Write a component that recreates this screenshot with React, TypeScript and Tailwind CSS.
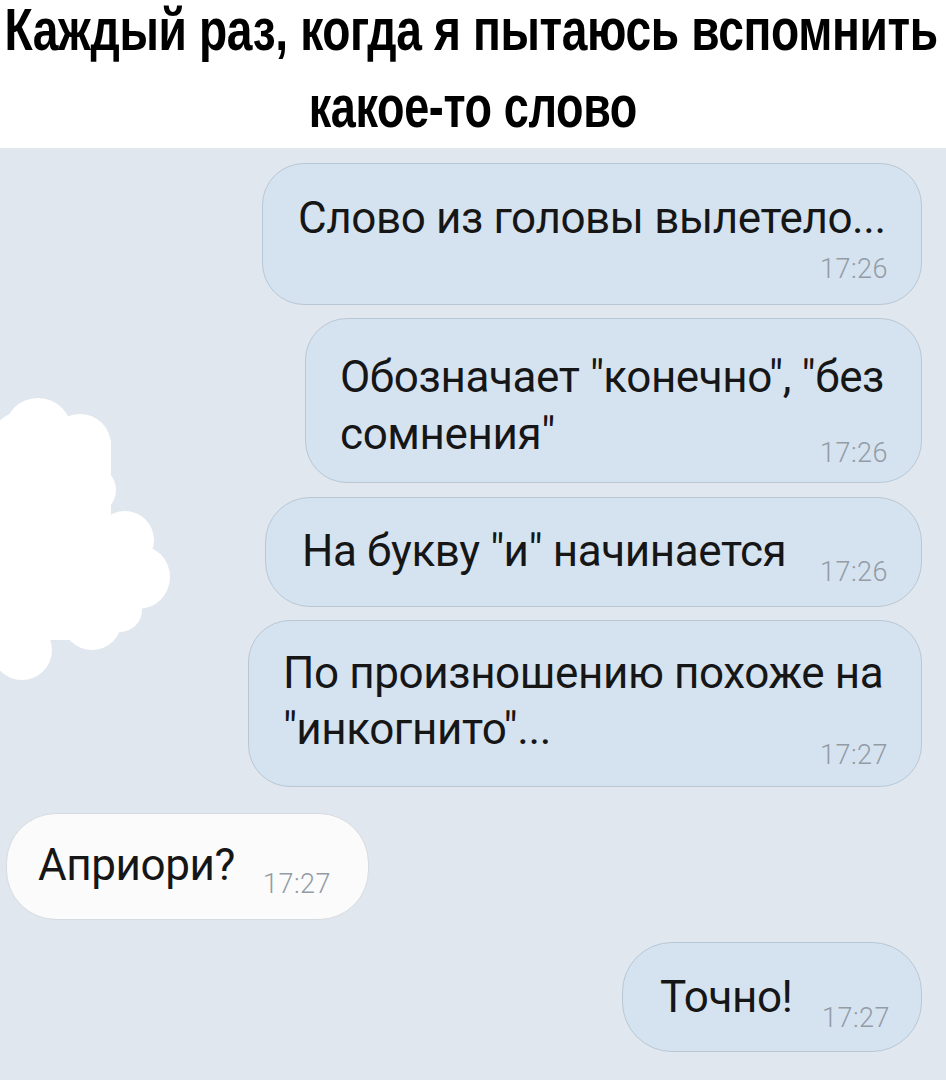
import React from 'react';

const textFont = { fontFamily: 'Roboto, "Liberation Sans", sans-serif' };

function Time({ value, shift }: { value: string; shift: string }) {
  return (
    <span className={`text-[27px] font-light leading-none tracking-[0.5px] text-[#939ba5] ${shift}`} style={textFont}>
      {value}
    </span>
  );
}

// white censor blob over the avatar
function Blob() {
  return (
    <svg className="absolute left-0 top-[232px]" width="180" height="320" viewBox="0 380 180 320">
      <g fill="#ffffff">
        <circle cx="38" cy="432" r="34" />
        <circle cx="20" cy="440" r="28" />
        <circle cx="80" cy="445" r="31" />
        <rect x="0" y="440" width="111" height="200" />
        <circle cx="92" cy="490" r="24" />
        <circle cx="125" cy="540" r="29" />
        <circle cx="138" cy="577" r="32" />
        <circle cx="120" cy="610" r="22" />
        <circle cx="92" cy="620" r="30" />
        <circle cx="22" cy="650" r="30" />
        <rect x="0" y="600" width="50" height="60" />
      </g>
    </svg>
  );
}

export default function App() {
  return (
    <div className="w-[946px] h-[1080px] overflow-hidden bg-white">
      <div
        className="h-[148px] flex flex-col items-center text-black font-bold"
        style={{ fontFamily: '"Liberation Sans", Arial, sans-serif' }}
      >
        <div className="text-[60px] leading-[60px] whitespace-nowrap scale-x-[0.77] tracking-[-0.5px] ml-[-4px]">
          Каждый раз, когда я пытаюсь вспомнить
        </div>
        <div className="mt-[17px] text-[60px] leading-[60px] whitespace-nowrap scale-x-[0.75] tracking-[-0.5px]">
          какое-то слово
        </div>
      </div>

      <div
        className="relative h-[932px] bg-[#e0e7ee] flex flex-col items-end pr-[24px] pt-[15px] text-[#161616] whitespace-nowrap"
        style={textFont}
      >
        <Blob />

        <div className="w-[660px] h-[142px] rounded-[42px] border border-[#b9c7d5] bg-[#d5e3f1] pl-[35px] pr-[33px] pt-[26px]">
          <div className="text-[44px] leading-[56px] tracking-[-0.4px]">Слово из головы вылетело...</div>
          <div className="flex justify-end mt-[10px]">
            <Time value="17:26" shift="" />
          </div>
        </div>

        <div className="mt-[13px] w-[617px] h-[165px] rounded-[42px] border border-[#b9c7d5] bg-[#d5e3f1] pl-[34px] pr-[33px] pt-[30px]">
          <div className="text-[44px] leading-[57px] tracking-[-0.4px]">Обозначает "конечно", "без</div>
          <div className="flex items-start justify-between">
            <div className="text-[44px] leading-[57px] tracking-[-0.4px]">сомнения"</div>
            <Time value="17:26" shift="mt-[34px]" />
          </div>
        </div>

        <div className="mt-[14px] w-[657px] h-[110px] rounded-[45px] border border-[#b9c7d5] bg-[#d5e3f1] pl-[36px] pr-[33px] pt-[25px] flex items-start justify-between">
          <div className="text-[44px] leading-[56px] tracking-[-0.4px]">На букву "и" начинается</div>
          <Time value="17:26" shift="mt-[36px]" />
        </div>

        <div className="mt-[13px] w-[674px] h-[167px] rounded-[42px] border border-[#b9c7d5] bg-[#d5e3f1] pl-[34px] pr-[33px] pt-[24px]">
          <div className="text-[44px] leading-[56px] tracking-[-0.4px]">По произношению похоже на</div>
          <div className="flex items-start justify-between">
            <div className="text-[44px] leading-[56px] tracking-[-0.4px]">"инкогнито"...</div>
            <Time value="17:27" shift="mt-[41px]" />
          </div>
        </div>

        <div className="self-start ml-[6px] mt-[26px] w-[363px] h-[107px] rounded-[50px] border border-[#d6dbe0] bg-[#fbfbfb] pl-[31px] pr-[37px] pt-[23px] flex items-start justify-between">
          <div className="text-[44px] leading-[56px] tracking-[-0.4px]">Априори?</div>
          <Time value="17:27" shift="mt-[34px] text-[#9a9c9f]" />
        </div>

        <div className="mt-[22px] w-[300px] h-[110px] rounded-[50px] border border-[#b9c7d5] bg-[#d5e3f1] pl-[37px] pr-[31px] pt-[26px] flex items-start justify-between">
          <div className="text-[44px] leading-[56px] tracking-[-0.4px]">Точно!</div>
          <Time value="17:27" shift="mt-[36px]" />
        </div>
      </div>
    </div>
  );
}
